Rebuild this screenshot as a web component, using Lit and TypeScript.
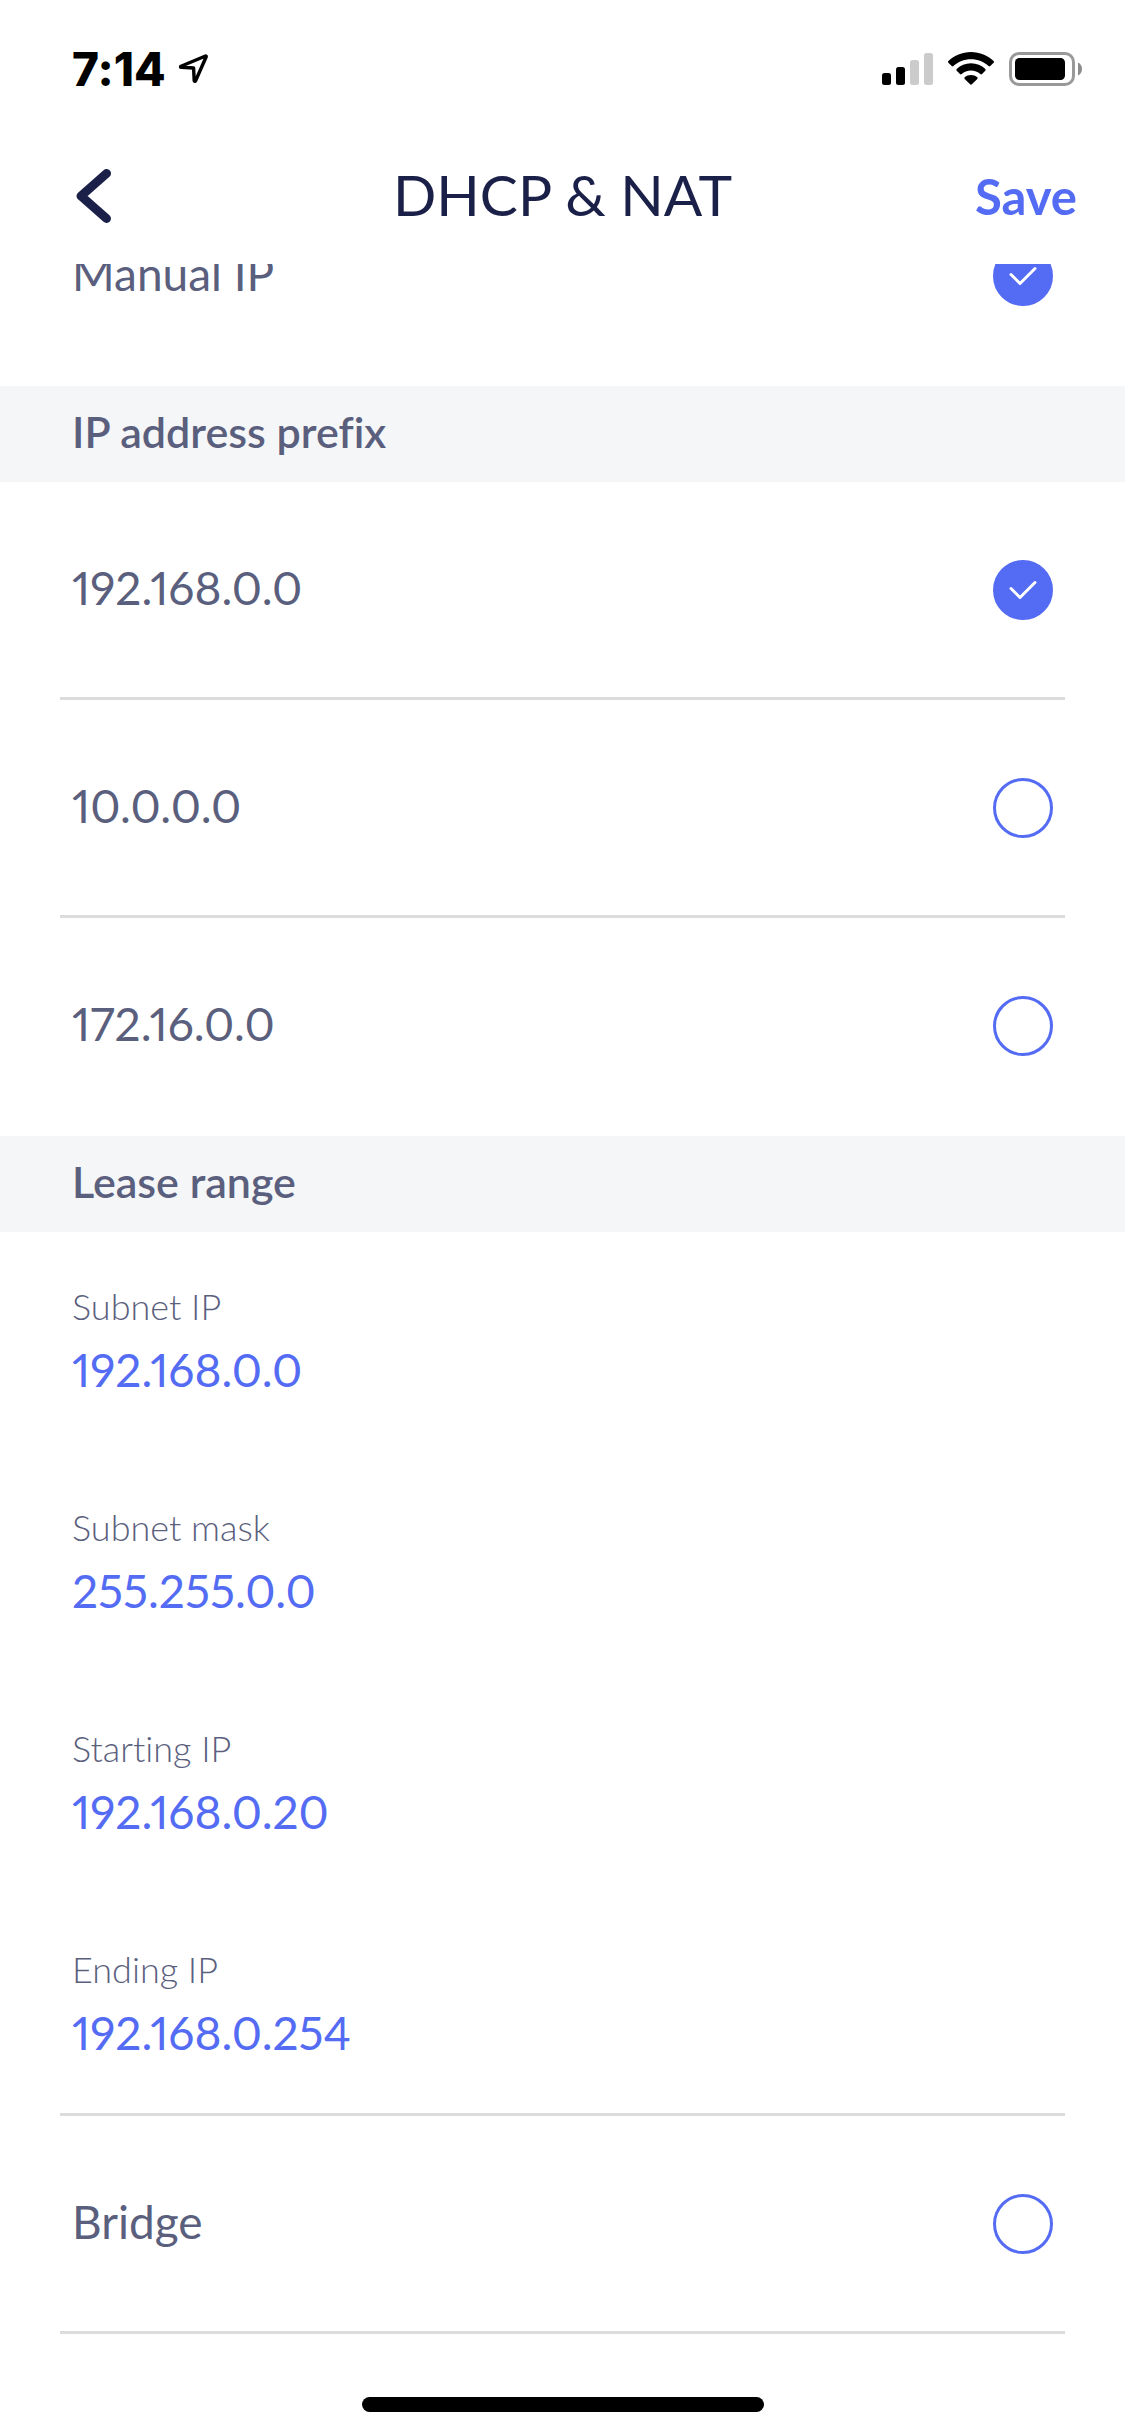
import { LitElement, html, css, svg, nothing } from "lit";
import { customElement, property, state } from "lit/decorators.js";

@customElement("status-bar")
class StatusBar extends LitElement {
  static styles = css`
    :host {
      display: flex;
      justify-content: space-between;
      align-items: center;
      height: 138px;
      padding: 0 42px 0 72px;
      box-sizing: border-box;
      font-family: Inter, "Liberation Sans", sans-serif;
    }
    .left,
    .right {
      display: flex;
      align-items: center;
    }
    .left {
      gap: 12px;
    }
    .right {
      gap: 15px;
    }
    .time {
      font-size: 46px;
      line-height: 52px;
      font-weight: 800;
      color: #000;
    }
    svg {
      display: block;
    }
  `;

  render() {
    return html`
      <div class="left">
        <span class="time">7:14</span>
        <svg width="31" height="32" viewBox="0 0 31 32" aria-hidden="true">
          <path
            d="M27.5 3 L3 13.2 C2.2 13.8 2.5 14.3 3.2 14.3 L15.6 15 L16.2 27.6 C16.4 28.6 17.2 28.6 17.6 27.8 L28.2 3.8 C28.4 3.2 28 2.8 27.5 3 Z"
            fill="none"
            stroke="#000"
            stroke-width="3.4"
            stroke-linejoin="round"
          />
        </svg>
      </div>
      <div class="right">
        <svg width="51" height="34" viewBox="0 0 51 34" aria-hidden="true">
          <rect x="0" y="21" width="9" height="12" rx="2.5" />
          <rect x="14" y="15" width="9" height="18" rx="2.5" />
          <rect x="28" y="8" width="9" height="25" rx="2.5" fill="#cbcbcb" />
          <rect x="42" y="1" width="9" height="32" rx="2.5" fill="#cbcbcb" />
        </svg>
        <svg width="46" height="34" viewBox="0 0 46 34" aria-hidden="true">
          <path d="M23 0 C31.8 0 39.8 3.5 45.6 9.1 C46.1 9.6 46.1 10.3 45.6 10.8 L42.3 14.1 C41.8 14.6 41.1 14.6 40.6 14.1 C35.9 9.8 29.8 7.2 23 7.2 C16.2 7.2 10.1 9.8 5.4 14.1 C4.9 14.6 4.2 14.6 3.7 14.1 L0.4 10.8 C-0.1 10.3 -0.1 9.6 0.4 9.1 C6.2 3.5 14.2 0 23 0 Z" />
          <path d="M23 11.3 C28.6 11.3 33.6 13.5 37.3 17 C37.8 17.5 37.8 18.2 37.3 18.7 L34 22 C33.5 22.5 32.8 22.5 32.3 22 C29.8 19.8 26.6 18.4 23 18.4 C19.4 18.4 16.2 19.8 13.7 22 C13.2 22.5 12.5 22.5 12 22 L8.7 18.7 C8.2 18.2 8.2 17.5 8.7 17 C12.4 13.5 17.4 11.3 23 11.3 Z" />
          <path d="M23 23 C25.4 23 27.6 23.8 29.3 25.2 C29.8 25.7 29.8 26.4 29.3 26.9 L23.9 32.3 C23.4 32.8 22.6 32.8 22.1 32.3 L16.7 26.9 C16.2 26.4 16.2 25.7 16.7 25.2 C18.4 23.8 20.6 23 23 23 Z" />
        </svg>
        <svg width="74" height="34" viewBox="0 0 74 34" aria-hidden="true">
          <rect x="1.5" y="1.5" width="63" height="31" rx="8.5" fill="none" stroke="#999" stroke-width="3" />
          <rect x="6" y="6" width="50" height="22" rx="4.5" />
          <path d="M69 10.5 C71.4 11.6 73 14 73 17 C73 20 71.4 22.4 69 23.5 Z" fill="#8c8c8c" />
        </svg>
      </div>
    `;
  }
}

@customElement("option-row")
class OptionRow extends LitElement {
  @property() label = "";
  @property() group = "";
  @property({ type: Boolean }) checked = false;
  @property({ type: Boolean }) divider = false;

  static styles = css`
    :host {
      display: block;
      margin: 0 60px;
    }
    .row {
      display: flex;
      align-items: center;
      justify-content: space-between;
      padding: 78px 12px 77px;
      border-bottom: 3px solid transparent;
      cursor: pointer;
    }
    .divided {
      border-bottom-color: #dcdcdc;
    }
    .text {
      font-size: 46px;
      line-height: 56px;
      padding-bottom: 4px;
      font-variant-numeric: proportional-nums;
      color: #5b5f7e;
    }
    .control {
      display: grid;
      place-items: center;
    }
    .radio,
    .tick {
      grid-area: 1 / 1;
    }
    .radio {
      appearance: none;
      box-sizing: border-box;
      width: 60px;
      height: 60px;
      margin: 0;
      border: 3px solid #546bf3;
      border-radius: 50%;
      background: #fff;
    }
    .radio:checked {
      background: #546bf3;
    }
    .tick {
      pointer-events: none;
    }
  `;

  private select() {
    this.dispatchEvent(new CustomEvent("choose", { detail: this.label }));
  }

  render() {
    return html`
      <label class="row ${this.divider ? "divided" : ""}">
        <span class="text">${this.label}</span>
        <span class="control">
          <input
            class="radio"
            type="radio"
            name=${this.group}
            .checked=${this.checked}
            @change=${this.select}
          />
          ${this.checked
            ? html`<svg class="tick" width="60" height="60" viewBox="0 0 60 60" aria-hidden="true">
                ${svg`<path d="M18 28.5 L27 37.5 L42 22.5" fill="none" stroke="#fff" stroke-width="3" stroke-linecap="round" stroke-linejoin="round" />`}
              </svg>`
            : nothing}
        </span>
      </label>
    `;
  }
}

@customElement("app-root")
class AppRoot extends LitElement {
  @state() private mode = "Manual IP";
  @state() private prefix = "192.168.0.0";

  private prefixes = ["192.168.0.0", "10.0.0.0", "172.16.0.0"];
  private fields = [
    { id: "subnet-ip", label: "Subnet IP", value: "192.168.0.0" },
    { id: "subnet-mask", label: "Subnet mask", value: "255.255.0.0" },
    { id: "starting-ip", label: "Starting IP", value: "192.168.0.20" },
    { id: "ending-ip", label: "Ending IP", value: "192.168.0.254" },
  ];

  static styles = css`
    :host {
      display: flex;
      flex-direction: column;
      min-height: 100vh;
      background: #fff;
      font-family: Lato, "Open Sans", sans-serif;
      font-variant-ligatures: none;
    }
    .nav {
      display: grid;
      grid-template-columns: 1fr auto 1fr;
      align-items: center;
      height: 126px;
      padding: 0 48px 10px;
      box-sizing: border-box;
    }
    .back,
    .save {
      border: 0;
      padding: 0;
      background: none;
      font-family: inherit;
      cursor: pointer;
    }
    .back {
      justify-self: start;
      padding-left: 24px;
    }
    .back svg {
      display: block;
    }
    .title {
      margin: 0;
      padding-bottom: 4px;
      font-size: 57px;
      line-height: 68px;
      font-weight: 400;
      color: #1a2048;
    }
    .save {
      justify-self: end;
      font-size: 49px;
      line-height: 60px;
      font-weight: 700;
      color: #546bf3;
    }
    .content {
      flex: 1;
      overflow: hidden;
    }
    .scrolled {
      margin-top: -96px;
    }
    .section {
      margin: 0;
      padding: 22px 72px 26px;
      background: #f5f6f8;
      color: #5b5f7e;
      font-size: 43px;
      line-height: 48px;
      font-weight: 600;
    }
    .fields {
      margin: 0 60px;
      border-bottom: 3px solid #dcdcdc;
      display: grid;
      gap: 105px;
      padding: 52px 12px 50px;
    }
    .field {
      display: flex;
      flex-direction: column;
      gap: 12px;
    }
    .name {
      font-size: 36px;
      line-height: 44px;
      font-weight: 300;
      color: #5b5f7e;
    }
    .value {
      border: 0;
      padding: 0;
      margin: 0;
      width: 100%;
      height: 60px;
      background: none;
      font-family: inherit;
      font-size: 46px;
      line-height: 60px;
      font-variant-numeric: proportional-nums;
      color: #546bf3;
      outline: none;
    }
    .home {
      display: flex;
      justify-content: center;
      padding: 10px 0 24px;
    }
    .pill {
      width: 402px;
      height: 15px;
      border-radius: 8px;
      background: #000;
    }
  `;

  render() {
    return html`
      <status-bar></status-bar>
      <header class="nav">
        <button class="back" aria-label="Back">
          <svg width="42" height="56" viewBox="0 0 42 56" aria-hidden="true">
            <path d="M34.5 5.5 L9 28 L34.5 50.5" fill="none" stroke="#1a2048" stroke-width="9" stroke-linecap="round" stroke-linejoin="round" />
          </svg>
        </button>
        <h1 class="title">DHCP &amp; NAT</h1>
        <button class="save">Save</button>
      </header>
      <main class="content">
        <div class="scrolled">
          ${this.modeRow("Manual IP", false)}
          <h2 class="section">IP address prefix</h2>
          ${this.prefixes.map(
            (p, i) => html`<option-row
              .label=${p}
              group="prefix"
              .checked=${this.prefix === p}
              .divider=${i < this.prefixes.length - 1}
              @choose=${() => (this.prefix = p)}
            ></option-row>`
          )}
          <h2 class="section">Lease range</h2>
          <div class="fields">
            ${this.fields.map(
              (f) => html`<div class="field">
                <label class="name" for=${f.id}>${f.label}</label>
                <input class="value" id=${f.id} type="text" .value=${f.value} />
              </div>`
            )}
          </div>
          ${this.modeRow("Bridge", true)}
        </div>
      </main>
      <div class="home"><div class="pill"></div></div>
    `;
  }

  private modeRow(name: string, divider: boolean) {
    return html`<option-row
      .label=${name}
      group="mode"
      .checked=${this.mode === name}
      .divider=${divider}
      @choose=${() => (this.mode = name)}
    ></option-row>`;
  }
}
